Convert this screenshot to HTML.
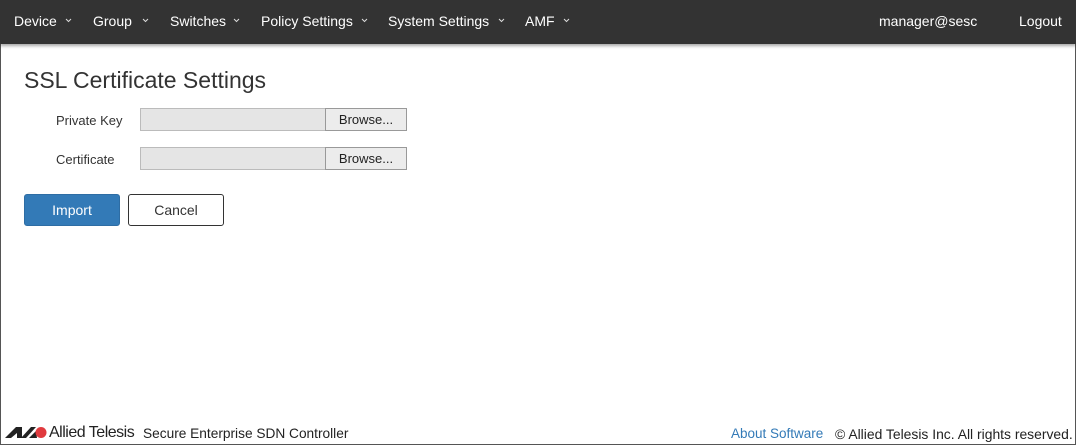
<!DOCTYPE html>
<html><head><style>
*{margin:0;padding:0;box-sizing:border-box}
body{width:1076px;height:445px;overflow:hidden;background:#fff;font-family:"Liberation Sans",sans-serif;color:#333;position:relative}
.frame{position:absolute;left:0;top:0;width:1076px;height:445px;border:1px solid #555;border-top:none}
.nav{position:absolute;left:0;top:0;width:1076px;height:44px;background:#333;box-shadow:0 2px 3px rgba(0,0,0,.35)}
.nav span{position:absolute;top:13px;color:#fff;font-size:14px}
.nav svg{position:absolute;top:18px}
.t{position:absolute}
.inp{position:absolute;left:140px;width:186px;height:23px;background:#e5e5e5;border:1px solid #bbb}
.br{position:absolute;left:325px;width:82px;height:23px;background:#ececec;border:1px solid #999;font-size:13px;text-align:center;line-height:21px;color:#222}
.btn{position:absolute;top:194px;height:32px;border-radius:3px;font-size:14px;text-align:center;line-height:30px}
</style></head><body>
<div class="frame"></div>
<div class="nav">
<span style="left:14px">Device</span>
<span style="left:93px">Group</span>
<span style="left:170px">Switches</span>
<span style="left:261px">Policy Settings</span>
<span style="left:388px">System Settings</span>
<span style="left:525px">AMF</span>
<svg style="left:65px" width="7" height="5"><path d="M1 1L3.5 3.5L6 1" stroke="#ddd" fill="none"/></svg>
<svg style="left:142px" width="7" height="5"><path d="M1 1L3.5 3.5L6 1" stroke="#ddd" fill="none"/></svg>
<svg style="left:233px" width="7" height="5"><path d="M1 1L3.5 3.5L6 1" stroke="#ddd" fill="none"/></svg>
<svg style="left:361px" width="7" height="5"><path d="M1 1L3.5 3.5L6 1" stroke="#ddd" fill="none"/></svg>
<svg style="left:498px" width="7" height="5"><path d="M1 1L3.5 3.5L6 1" stroke="#ddd" fill="none"/></svg>
<svg style="left:563px" width="7" height="5"><path d="M1 1L3.5 3.5L6 1" stroke="#ddd" fill="none"/></svg>
<span style="left:879px">manager@sesc</span>
<span style="left:1019px">Logout</span>
</div>
<div class="t" style="left:24px;top:67px;font-size:23px;color:#333">SSL Certificate Settings</div>
<div class="t" style="left:56px;top:113px;font-size:13px">Private Key</div>
<div class="inp" style="top:108px"></div><div class="br" style="top:108px">Browse...</div>
<div class="t" style="left:56px;top:152px;font-size:13px">Certificate</div>
<div class="inp" style="top:147px"></div><div class="br" style="top:147px">Browse...</div>
<div class="btn" style="left:24px;width:96px;background:#337ab7;border:1px solid #2e6da4;color:#fff">Import</div>
<div class="btn" style="left:128px;width:96px;background:#fff;border:1px solid #333;color:#333">Cancel</div>
<svg class="t" style="left:5px;top:425px" width="42" height="14" viewBox="0 0 42 14">
<polygon points="0,13 11,2 17,2 17,13 12,13 12,8 6,13" fill="#222"/>
<polygon points="16,13 26,2 31,2 21,13" fill="#222"/>
<polygon points="24,13 31,6 32,13" fill="#222"/>
<circle cx="36" cy="7.5" r="5.5" fill="#e03a3e"/>
</svg>
<div class="t" style="left:49px;top:424px;font-size:16px;color:#222;letter-spacing:-0.5px">Allied Telesis</div>
<div class="t" style="left:143px;top:426px;font-size:13.7px;color:#222">Secure Enterprise SDN Controller</div>
<div class="t" style="left:731px;top:426px;font-size:13.5px;color:#337ab7">About Software</div>
<div class="t" style="left:835px;top:426px;font-size:13.9px;color:#222">© Allied Telesis Inc. All rights reserved.</div>
</body></html>
